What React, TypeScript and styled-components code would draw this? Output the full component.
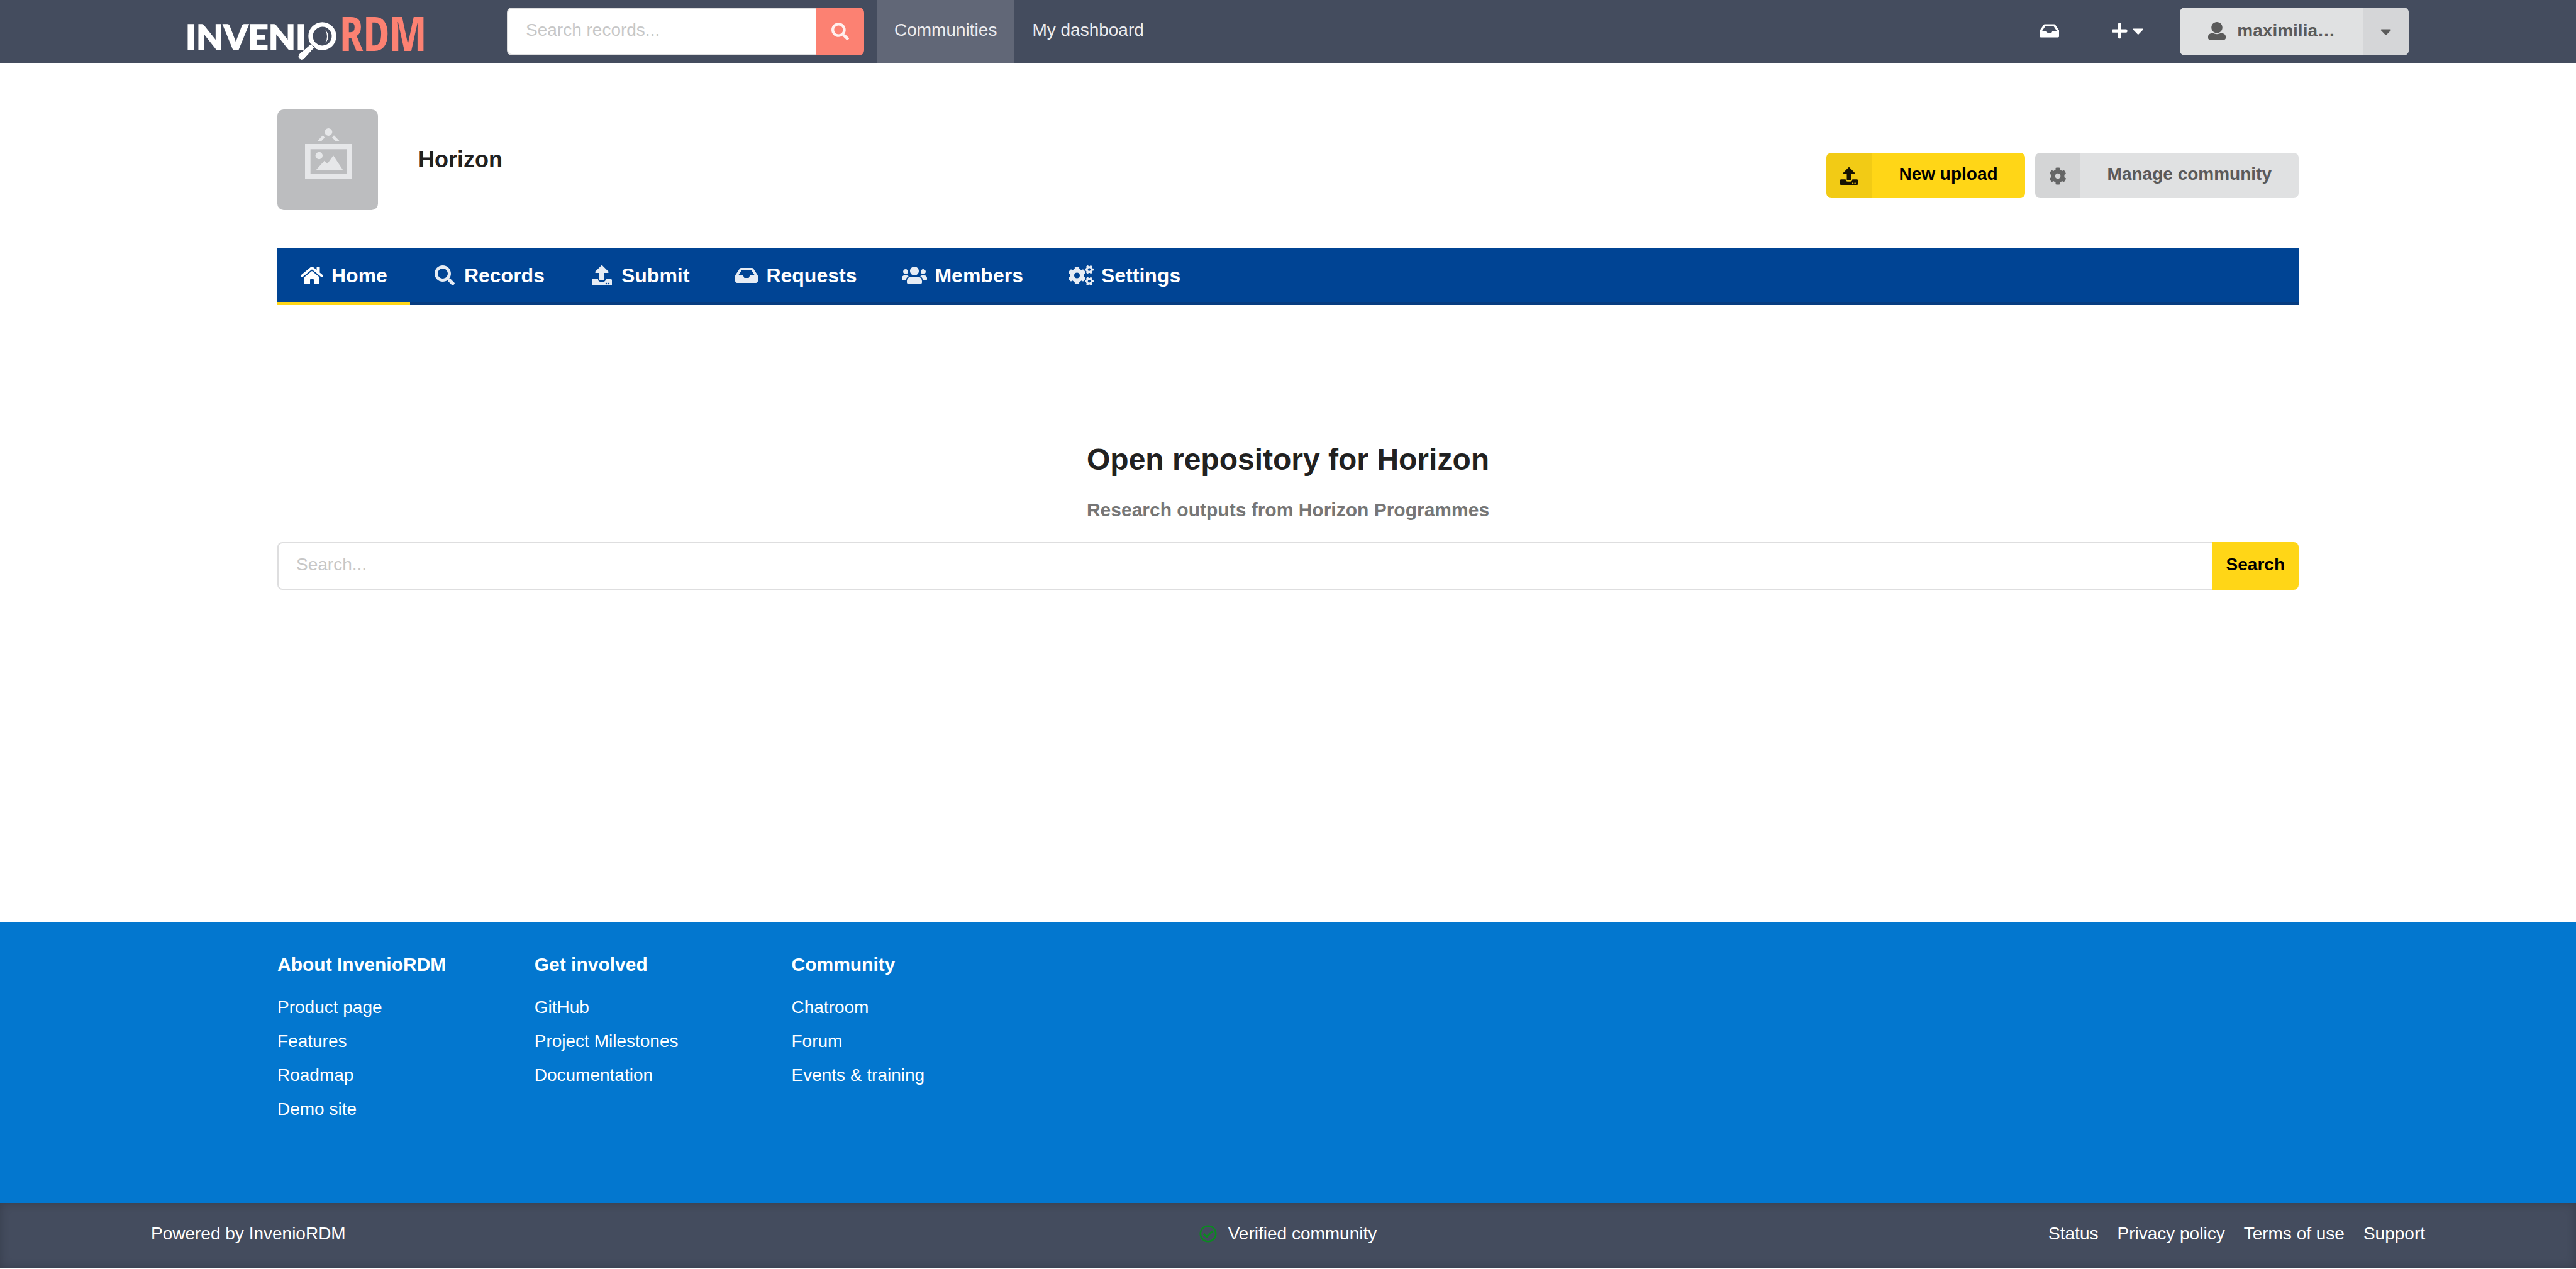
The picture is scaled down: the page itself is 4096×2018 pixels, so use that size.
import React from "react";
import styled, { createGlobalStyle } from "styled-components";
import {
  FaCaretDown,
  FaCog,
  FaCogs,
  FaHome,
  FaInbox,
  FaPlus,
  FaRegCheckCircle,
  FaSearch,
  FaUpload,
  FaUsers,
} from "react-icons/fa";

const color = {
  slate: "#444c5e",
  salmon: "#fc8172",
  navy: "#004494",
  navyEdge: "#073c80",
  blue: "#0377cf",
  yellow: "#ffd617",
  grey: "#e0e1e2",
  greyText: "#5a5a5a",
  text: "#212121",
  line: "#dededf",
  placeholder: "#c7c7c7",
};

const GlobalStyle = createGlobalStyle`
  *, *::before, *::after { box-sizing: border-box; }
  body {
    margin: 0;
    background: #fff;
    color: ${color.text};
    font-family: "Liberation Sans", Arial, sans-serif;
    font-size: 28px;
    line-height: 40px;
  }
  button, input { font: inherit; }
  button { border: 0; padding: 0; margin: 0; cursor: pointer; }
  a { color: inherit; text-decoration: none; }
  ul { list-style: none; margin: 0; padding: 0; }
  h1, h2, h3, p { margin: 0; }
  svg { display: block; flex: none; }
`;

const Page = styled.div`
  display: flex;
  flex-direction: column;
  min-height: 100vh;
  padding-bottom: 1px;
`;

/* Icons are one em high; $units is the glyph's width on its 512-unit grid. */
const Icon = styled.span<{ $units?: number }>`
  display: flex;
  svg {
    width: calc(1em * ${(p) => p.$units ?? 512} / 512);
    height: 1em;
  }
`;

/* ---------- top bar ---------- */

const TopBar = styled.header`
  display: flex;
  height: 100px;
  padding: 0 266px 0 290px;
  background: ${color.slate};
  color: #fff;
`;

const LogoLink = styled.a`
  display: flex;
  width: 516px;
`;

const TopSearch = styled.form`
  display: flex;
  align-self: center;
  width: 568px;
  height: 76px;
  margin-right: 20px;
`;

const TextField = styled.input`
  flex: 1;
  min-width: 0;
  border: 2px solid ${color.line};
  border-right-width: 0;
  border-radius: 8px 0 0 8px;
  padding: 0 28px 4px;
  background: #fff;
  color: ${color.text};
  outline: none;
  &::placeholder {
    color: ${color.placeholder};
    opacity: 1;
  }
`;

const TopSearchButton = styled.button`
  display: flex;
  align-items: center;
  justify-content: center;
  width: 77px;
  border-radius: 0 8px 8px 0;
  background: ${color.salmon};
  color: #fff0ee;
`;

const TopNav = styled.nav`
  display: flex;
  flex: 1;
`;

const TopLink = styled.a<{ $active?: boolean }>`
  display: flex;
  align-items: center;
  padding: 0 28px 4px;
  background: ${(p) => (p.$active ? "#616777" : "transparent")};
  color: #ececef;
`;

const TopTools = styled.div`
  display: flex;
  align-items: center;
`;

const ToolButton = styled.button`
  display: flex;
  align-items: center;
  gap: 8px;
  height: 100px;
  padding: 0 42px 2px;
  background: transparent;
  color: #fff;
`;

const UserGroup = styled.div`
  display: flex;
  height: 76px;
  margin-left: 16px;
  border-radius: 8px;
  overflow: hidden;
  background: ${color.grey};
  color: ${color.greyText};
`;

const UserButton = styled.button`
  display: flex;
  align-items: center;
  gap: 18px;
  padding: 0 45px 2px;
  background: transparent;
  color: inherit;
  font-weight: 700;
`;

const UserToggle = styled.button`
  display: flex;
  align-items: center;
  justify-content: center;
  width: 72px;
  background: #d5d6d8;
  color: inherit;
`;

/* ---------- community ---------- */

const Main = styled.main`
  flex: 1;
  padding: 74px 441px 0;
`;

const Identity = styled.div`
  display: flex;
  align-items: center;
`;

const Avatar = styled.div`
  border-radius: 10px;
  overflow: hidden;
  background: #bcbdbf;
`;

const CommunityName = styled.h1`
  flex: 1;
  padding-left: 64px;
  font-size: 36px;
`;

const Actions = styled.div`
  display: flex;
  gap: 16px;
  padding-top: 50px;
`;

const ActionButton = styled.button<{ $primary?: boolean }>`
  display: flex;
  height: 72px;
  border-radius: 8px;
  overflow: hidden;
  background: ${(p) => (p.$primary ? color.yellow : color.grey)};
  color: ${(p) => (p.$primary ? "#000" : color.greyText)};
  font-weight: 700;
`;

const ActionIcon = styled(Icon)`
  align-items: center;
  justify-content: center;
  width: 72px;
  height: 100%;
  padding-top: 2px;
  background: rgba(0, 0, 0, 0.05);
  svg {
    opacity: 0.9;
  }
`;

const ActionLabel = styled.span`
  align-self: center;
  padding: 0 43px 4px;
`;

const Tabs = styled.nav`
  display: flex;
  margin-top: 60px;
  height: 91px;
  background: ${color.navy};
  box-shadow: inset 0 -4px ${color.navyEdge};
  color: #fff;
`;

const Tab = styled.a<{ $active?: boolean }>`
  display: flex;
  align-items: center;
  padding: 0 36px;
  border-bottom: 4px solid ${(p) => (p.$active ? color.yellow : "transparent")};
  font-size: 32px;
  font-weight: 700;
  svg {
    opacity: ${(p) => (p.$active ? 1 : 0.9)};
  }
`;

const TabIcon = styled(Icon)`
  justify-content: center;
  min-width: 38px;
  margin-right: 12px;
`;

const Hero = styled.section`
  display: flex;
  flex-direction: column;
  padding-top: 216px;
  text-align: center;
`;

const HeroTitle = styled.h2`
  font-size: 48px;
  line-height: 60px;
`;

const HeroText = styled.p`
  margin-top: 30px;
  color: #767676;
  font-size: 30px;
  font-weight: 700;
`;

const HeroSearch = styled.form`
  display: flex;
  height: 76px;
  margin-top: 31px;
`;

const HeroSearchButton = styled.button`
  padding: 0 22px 4px;
  border-radius: 0 8px 8px 0;
  background: ${color.yellow};
  color: #000;
  font-weight: 700;
`;

/* ---------- footer ---------- */

const FooterLinks = styled.div`
  padding: 48px 413px 122px;
  background: ${color.blue};
  color: #fff;
`;

const FooterGrid = styled.div`
  display: grid;
  grid-template-columns: repeat(8, 1fr);
`;

const FooterColumn = styled.section`
  padding: 0 28px;
  white-space: nowrap;
`;

const FooterHeading = styled.h3`
  margin-bottom: 21px;
  font-size: 30px;
`;

const FooterItem = styled.li`
  line-height: 54px;
`;

const BottomBar = styled.div`
  display: grid;
  grid-template-columns: 1fr auto 1fr;
  align-items: center;
  height: 104px;
  padding: 0 240px 6px;
  background: ${color.slate};
  box-shadow: inset 0 0 16px rgba(0, 0, 0, 0.2);
  color: #fff;
`;

const Verified = styled.span`
  display: flex;
  align-items: center;
  gap: 18px;
  svg {
    color: #0a8a20;
  }
`;

const LegalLinks = styled.nav`
  display: flex;
  justify-content: flex-end;
  gap: 30px;
`;

/* ---------- drawings ---------- */

const LogoSvg = styled.svg`
  overflow: visible;
`;

const LogoInvenio = styled.text`
  fill: #fff;
  stroke: #fff;
  stroke-width: 1.5px;
  font-family: "Lato Black", Lato, sans-serif;
  font-size: 56px;
  font-weight: 900;
`;

const LogoRdm = styled.text`
  fill: ${color.salmon};
  font-family: "Noto Sans ExtraCondensed", "Open Sans Condensed", "Roboto Condensed",
    "Liberation Sans Narrow", sans-serif;
  font-size: 75px;
  font-weight: 700;
`;

function Logo() {
  return (
    <LogoSvg width="408" height="100" viewBox="-8 0 408 100" role="img" aria-label="InvenioRDM">
      <LogoInvenio x="-3" y="79">
        INVENI
      </LogoInvenio>
      <circle cx="214.500" cy="57.500" r="18.600" fill="none" stroke="#fff" strokeWidth="7.200" />
      <path d="M219.500 48q9 10 0 20q5-10 0-20z" fill="#fff" />
      <path
        d="M196 70L177.500 86q-3 4 0 7.500q3.500 3.500 7.500 1L202.500 75z"
        fill="#fff"
        stroke={color.slate}
        strokeWidth="1"
      />
      <LogoRdm x="242" y="81">
        RDM
      </LogoRdm>
    </LogoSvg>
  );
}

function UserIcon() {
  return (
    <svg width="28" height="28" viewBox="0 0 512 512" fill="currentColor" aria-hidden="true">
      <path d="M256 0c88.366 0 160 71.634 160 160s-71.634 160-160 160S96 248.366 96 160 167.634 0 256 0zm183.283 333.821l-71.313-17.828c-74.923 53.89-165.738 41.864-223.94 0l-71.313 17.828C29.981 344.505 0 382.903 0 426.955V464c0 26.51 21.49 48 48 48h416c26.51 0 48-21.49 48-48v-37.045c0-44.052-29.981-82.45-72.717-93.134z" />
    </svg>
  );
}

function FramePlaceholder() {
  return (
    <svg width="160" height="160" viewBox="0 0 160 160" fill="#e6e7e9" aria-hidden="true">
      <circle cx="81.300" cy="36" r="6" />
      <path d="M63.300 50.700h6.400l5.600-6-3-3.400zM93 50.700h6.300L90 41.300l-3 3.400z" />
      <path fillRule="evenodd" d="M44 55h75v56H44zM52.700 63.300v39.400h57.600V63.300z" />
      <circle cx="66.300" cy="73.500" r="5.700" />
      <path d="M61 97l13.700-15.300 5 4.600L89 73.300 104.700 97z" />
    </svg>
  );
}

/* ---------- content ---------- */

const tabs = [
  { label: "Home", Glyph: FaHome, units: 576 },
  { label: "Records", Glyph: FaSearch, units: 512 },
  { label: "Submit", Glyph: FaUpload, units: 512 },
  { label: "Requests", Glyph: FaInbox, units: 576 },
  { label: "Members", Glyph: FaUsers, units: 640 },
  { label: "Settings", Glyph: FaCogs, units: 640 },
];

const footerColumns = [
  { title: "About InvenioRDM", links: ["Product page", "Features", "Roadmap", "Demo site"] },
  { title: "Get involved", links: ["GitHub", "Project Milestones", "Documentation"] },
  { title: "Community", links: ["Chatroom", "Forum", "Events & training"] },
];

const legal = ["Status", "Privacy policy", "Terms of use", "Support"];

const stop = (e: React.FormEvent) => e.preventDefault();

export default function App() {
  return (
    <Page>
      <GlobalStyle />
      <TopBar>
        <LogoLink href="#">
          <Logo />
        </LogoLink>
        <TopSearch role="search" onSubmit={stop}>
          <TextField type="text" placeholder="Search records..." aria-label="Search records" />
          <TopSearchButton aria-label="Search">
            <Icon>
              <FaSearch />
            </Icon>
          </TopSearchButton>
        </TopSearch>
        <TopNav>
          <TopLink href="#" $active>
            Communities
          </TopLink>
          <TopLink href="#">My dashboard</TopLink>
        </TopNav>
        <TopTools>
          <ToolButton aria-label="Requests">
            <Icon $units={576}>
              <FaInbox />
            </Icon>
          </ToolButton>
          <ToolButton aria-label="Create">
            <Icon $units={448}>
              <FaPlus />
            </Icon>
            <Icon $units={320}>
              <FaCaretDown />
            </Icon>
          </ToolButton>
          <UserGroup>
            <UserButton>
              <UserIcon />
              maximilia…
            </UserButton>
            <UserToggle aria-label="Account menu">
              <Icon $units={320}>
                <FaCaretDown />
              </Icon>
            </UserToggle>
          </UserGroup>
        </TopTools>
      </TopBar>

      <Main>
        <Identity>
          <Avatar>
            <FramePlaceholder />
          </Avatar>
          <CommunityName>Horizon</CommunityName>
          <Actions>
            <ActionButton $primary>
              <ActionIcon>
                <FaUpload />
              </ActionIcon>
              <ActionLabel>New upload</ActionLabel>
            </ActionButton>
            <ActionButton>
              <ActionIcon>
                <FaCog />
              </ActionIcon>
              <ActionLabel>Manage community</ActionLabel>
            </ActionButton>
          </Actions>
        </Identity>

        <Tabs>
          {tabs.map(({ label, Glyph, units }, i) => (
            <Tab key={label} href="#" $active={i === 0}>
              <TabIcon $units={units}>
                <Glyph />
              </TabIcon>
              {label}
            </Tab>
          ))}
        </Tabs>

        <Hero>
          <HeroTitle>Open repository for Horizon</HeroTitle>
          <HeroText>Research outputs from Horizon Programmes</HeroText>
          <HeroSearch role="search" onSubmit={stop}>
            <TextField type="text" placeholder="Search..." aria-label="Search this community" />
            <HeroSearchButton>Search</HeroSearchButton>
          </HeroSearch>
        </Hero>
      </Main>

      <footer>
        <FooterLinks>
          <FooterGrid>
            {footerColumns.map((column) => (
              <FooterColumn key={column.title}>
                <FooterHeading>{column.title}</FooterHeading>
                <ul>
                  {column.links.map((link) => (
                    <FooterItem key={link}>
                      <a href="#">{link}</a>
                    </FooterItem>
                  ))}
                </ul>
              </FooterColumn>
            ))}
          </FooterGrid>
        </FooterLinks>
        <BottomBar>
          <span>Powered by InvenioRDM</span>
          <Verified>
            <Icon>
              <FaRegCheckCircle />
            </Icon>
            Verified community
          </Verified>
          <LegalLinks>
            {legal.map((item) => (
              <a key={item} href="#">
                {item}
              </a>
            ))}
          </LegalLinks>
        </BottomBar>
      </footer>
    </Page>
  );
}
